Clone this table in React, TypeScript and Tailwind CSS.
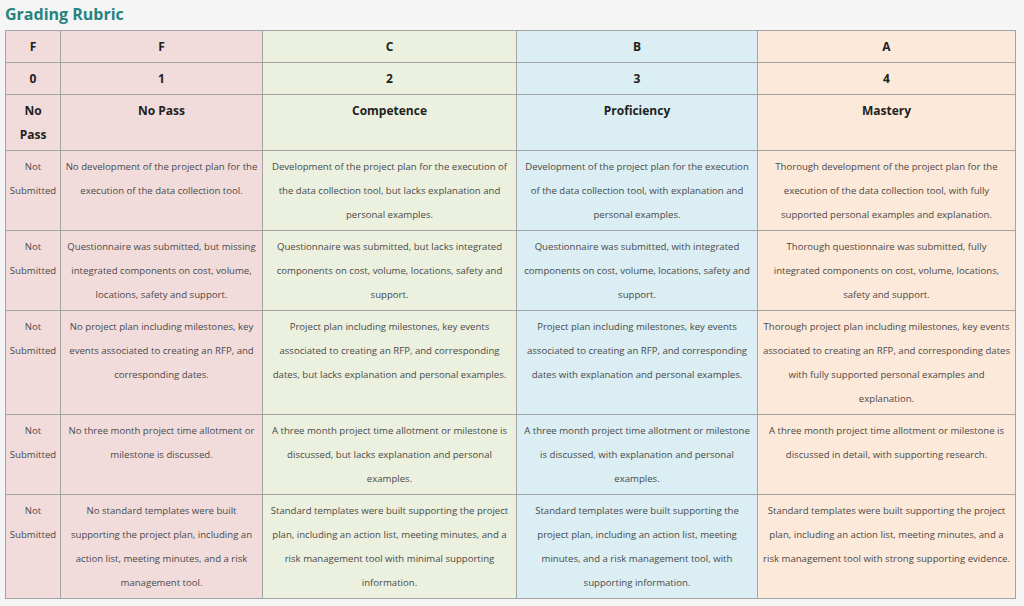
const cols = [
  { grade: 'F', points: '0', label: 'No Pass', bg: 'bg-[#f2dcdb]', pad: 'px-[3px]' },
  { grade: 'F', points: '1', label: 'No Pass', bg: 'bg-[#f2dcdb]', pad: 'px-[3px]' },
  { grade: 'C', points: '2', label: 'Competence', bg: 'bg-[#ebf1de]', pad: 'px-[3px]' },
  { grade: 'B', points: '3', label: 'Proficiency', bg: 'bg-[#daeef3]', pad: 'px-[3px]' },
  { grade: 'A', points: '4', label: 'Mastery', bg: 'bg-[#fde9d9]', pad: 'px-[4px]' },
]

const rows: string[][] = [
  [
    'No development of the project plan for the execution of the data collection tool.',
    'Development of the project plan for the execution of the data collection tool, but lacks explanation and personal examples.',
    'Development of the project plan for the execution of the data collection tool, with explanation and personal examples.',
    'Thorough development of the project plan for the execution of the data collection tool, with fully supported personal examples and explanation.',
  ],
  [
    'Questionnaire was submitted, but missing integrated components on cost, volume, locations, safety and support.',
    'Questionnaire was submitted, but lacks integrated components on cost, volume, locations, safety and support.',
    'Questionnaire was submitted, with integrated components on cost, volume, locations, safety and support.',
    'Thorough questionnaire was submitted, fully\nintegrated components on cost, volume, locations, safety and support.',
  ],
  [
    'No project plan including milestones, key events associated to creating an RFP, and corresponding dates.',
    'Project plan including milestones, key events associated to creating an RFP, and corresponding dates, but lacks explanation and personal examples.',
    'Project plan including milestones, key events associated to creating an RFP, and corresponding dates with explanation and personal examples.',
    'Thorough project plan including milestones, key events associated to creating an RFP, and corresponding dates with fully supported personal examples and explanation.',
  ],
  [
    'No three month project time allotment or milestone is discussed.',
    'A three month project time allotment or milestone is discussed, but lacks explanation and personal examples.',
    'A three month project time allotment or milestone is discussed, with explanation and personal examples.',
    'A three month project time allotment or milestone is discussed in detail, with supporting research.',
  ],
  [
    'No standard templates were built supporting the project plan, including an action list, meeting minutes, and a risk management tool.',
    'Standard templates were built supporting the project plan, including an action list, meeting minutes, and a risk management tool with minimal supporting information.',
    'Standard templates were built supporting the project plan, including an action list, meeting minutes, and a risk management tool, with supporting information.',
    'Standard templates were built supporting the project plan, including an action list, meeting minutes, and a risk management tool with strong supporting evidence.',
  ],
]

export default function App() {
  const cell = 'border border-[#a3a3a3] align-top text-center'
  const head = `${cell} pt-[4px] pb-[3px] text-[12px] font-bold text-[#222] leading-[24px]`
  const body = `${cell} pt-[4px] pb-[3px] text-[9.6px] text-[#4a4a4a] leading-[24px] whitespace-pre-line`

  return (
    <div className="min-h-screen bg-[#f5f5f5] px-[5px] font-['Open_Sans',sans-serif]">
      {/* Title */}
      <h2 className="h-[30px] pt-[2px] text-[16px] font-bold leading-[24px] text-[#26837f]">
        Grading Rubric
      </h2>

      {/* Rubric table */}
      <table className="w-[1010px] table-fixed border-collapse">
        <colgroup>
          <col className="w-[55px]" />
          <col className="w-[202px]" />
          <col className="w-[254px]" />
          <col className="w-[241px]" />
          <col className="w-[258px]" />
        </colgroup>
        <thead>
          <tr>
            {cols.map((c, i) => (
              <th key={i} className={`${head} ${c.pad} ${c.bg}`}>{c.grade}</th>
            ))}
          </tr>
          <tr>
            {cols.map((c, i) => (
              <th key={i} className={`${head} ${c.pad} ${c.bg}`}>{c.points}</th>
            ))}
          </tr>
          <tr>
            {cols.map((c, i) => (
              <th key={i} className={`${head} ${c.pad} ${c.bg} h-[56px]`}>
                {i === 0 ? (
                  <>
                    No
                    <br />
                    Pass
                  </>
                ) : (
                  c.label
                )}
              </th>
            ))}
          </tr>
        </thead>
        <tbody>
          {rows.map((r, ri) => (
            <tr key={ri}>
              <td className={`${body} ${cols[0].pad} ${cols[0].bg}`}>Not Submitted</td>
              {r.map((text, ci) => (
                <td key={ci} className={`${body} ${cols[ci + 1].pad} ${cols[ci + 1].bg}`}>{text}</td>
              ))}
            </tr>
          ))}
        </tbody>
      </table>
    </div>
  )
}
